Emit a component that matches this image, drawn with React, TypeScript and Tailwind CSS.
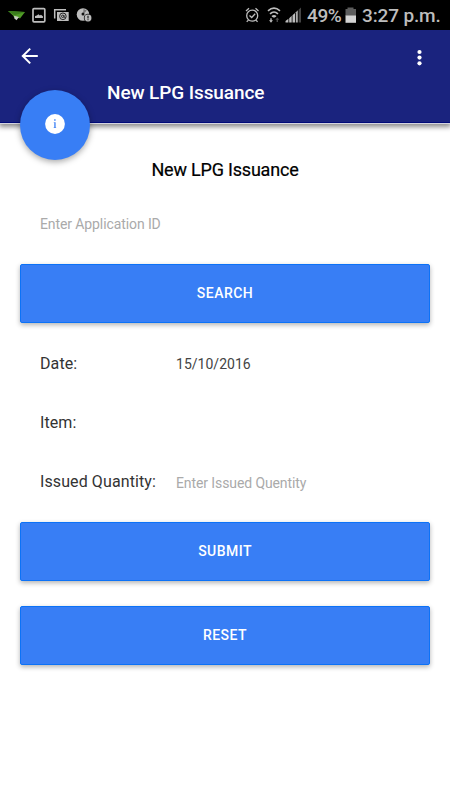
import type { ReactNode } from "react";

const FONT = "font-['Roboto','Liberation_Sans',sans-serif]";

function StatusBar() {
  return (
    <div className="flex h-[30px] items-center bg-black text-[#bdbdbd]">
      <svg width="104" height="30" viewBox="0 0 104 30" fill="none" className="shrink-0">
        <path d="M8 11 25 12 20 18.5 16.5 17 14.5 18 13 15.5Z" fill="#4f9a26" />
        <path d="M8 11 25 12 14.5 15.2Z" fill="#3a7d1c" />
        <path d="M14 15.8 19 17 16.5 20.2 14.5 18.5Z" fill="#c5cfc0" />
        <rect x="33" y="8.6" width="11.8" height="13.2" rx="1" stroke="currentColor" strokeWidth="1.7" />
        <path d="M35 18v-2l1.8-.4 1.6-1.4 1.5 1.2 1-.6 2 1.4V18Z" fill="currentColor" />
        <path d="M54.7 18.5V9.8H66" stroke="currentColor" strokeWidth="1.5" />
        <path d="M57 12h11.7v9H57Z" fill="currentColor" />
        <circle cx="62.9" cy="16.3" r="3.3" stroke="#222" strokeWidth="1" />
        <circle cx="62.7" cy="16.3" r="1.2" stroke="#222" strokeWidth="1" />
        <path d="M64 15v2.3h1.5" stroke="#222" strokeWidth=".8" />
        <circle cx="83" cy="14.5" r="6.3" fill="currentColor" />
        <path d="m83 14.5.5-5.5 3.3 1.5Z" fill="#777" />
        <circle cx="83" cy="14" r="1.5" fill="#111" />
        <circle cx="88" cy="18" r="4.2" fill="#111" />
        <circle cx="88" cy="18" r="3.4" fill="currentColor" />
        <path d="M88 15.8v2.7m0 .8v1" stroke="#111" strokeWidth="1.1" />
      </svg>
      <svg width="62" height="30" viewBox="242 0 62 30" fill="none" className="ml-[138px] shrink-0">
        <circle cx="252.2" cy="15.7" r="5.5" stroke="currentColor" strokeWidth="1.3" />
        <path d="m249.5 15.5 2.2 2 3.5-3.8M246 11l3-2.7m9.5 2.7-3-2.7m-7 11.8-1.8 1.7m9.1-1.7 1.8 1.7" stroke="currentColor" strokeWidth="1.3" />
        <path d="M268 10.8q6-5.3 12 0m-10 3q4-3.6 8 0m-6 2.8q2-1.7 4 0" stroke="currentColor" strokeWidth="1.6" />
        <path d="M271.7 18.3v2h1.3l-2 2.4-2-2.4h1.3v-2Z" fill="currentColor" />
        <path d="M273 16h2v1.6h-2Z" fill="currentColor" />
        <path d="M276.6 22v-2.2h-1.3l2-2.3 2 2.3h-1.3V22Z" fill="#4a4a4a" />
        <path d="M285.5 22.5v-1.4l2.9-2.4v3.8Zm3.7 0v-4.3l2.5-2.4v6.7Zm3.3 0v-7.2l2.5-2.4v9.6Z" fill="currentColor" />
        <path d="M295.8 22.5V12.3l2-2v12.2Z" fill="#aaa" />
        <path d="M298.6 22.5V9.7l2.4-2.2v15Z" fill="#444" />
      </svg>
      <span className="ml-[3px] w-[36px] whitespace-nowrap pt-px text-[19px] font-medium leading-[30px] tracking-[-0.4px]">49%</span>
      <svg width="14" height="30" viewBox="343 0 14 30" className="shrink-0">
        <path d="M345.5 9h2V7.6h6V9h2.5v7h-10.5Z" fill="#5c5c5c" />
        <path d="M345.5 15.5H356v7.3h-10.5Z" fill="#d3d3d3" />
      </svg>
      <span className="ml-[5px] whitespace-nowrap pt-px text-[19px] font-medium leading-[30px] tracking-[-0.15px]">3:27 p.m.</span>
    </div>
  );
}

function Header() {
  return (
    <header className="relative h-[93px] border-b border-[#000a78] bg-[#1a237e] text-white shadow-[0_1px_0_#d4d4df,0_3px_5px_1px_rgba(0,0,0,0.45)]">
      <div className="flex h-[52px] items-center justify-between pl-[21px] pr-[28px]">
        <button type="button" aria-label="Back">
          <svg width="18" height="18" viewBox="0 0 18 18" fill="none" stroke="white" strokeWidth="2">
            <path d="M16.8 9H2M9.2 1.6 1.8 9l7.4 7.4" />
          </svg>
        </button>
        <button type="button" aria-label="Menu" className="mt-[3px]">
          <svg width="5" height="18" viewBox="0 0 5 18" fill="white">
            <circle cx="2.5" cy="3" r="2.1" />
            <circle cx="2.5" cy="8.6" r="2.1" />
            <circle cx="2.5" cy="14.3" r="2.1" />
          </svg>
        </button>
      </div>
      <h1 className="pl-[107px] pt-px text-[19px] font-medium leading-5 tracking-[-0.1px]">New LPG Issuance</h1>
      <div className="absolute left-5 top-[60px] flex size-[70px] items-center justify-center rounded-full bg-[#387ef5] shadow-[0_2px_6px_rgba(0,0,0,0.35)]">
        <svg width="20" height="20" viewBox="0 0 20 20" className="-mt-[3px]">
          <circle cx="10" cy="10" r="9.9" fill="white" />
          <path d="M9.2 5.2h1.4v1.5H9.2Zm-.5 3h1.9v5.3h.6v.6H8.6v-.6h.7V8.8h-.6Z" fill="#387ef5" />
        </svg>
      </div>
    </header>
  );
}

function Button({ children }: { children: ReactNode }) {
  return (
    <button
      type="button"
      className="block h-[59px] w-full rounded-[2px] border border-[#0c72f7] bg-[#387ef5] text-[14px] font-medium tracking-[0.45px] text-white shadow-[0_2px_5px_rgba(0,0,0,0.3)]"
    >
      {children}
    </button>
  );
}

function Row({ label, children }: { label: string; children?: ReactNode }) {
  return (
    <div className="flex h-[59px] items-center pl-5">
      <span className="w-[136px] shrink-0 whitespace-nowrap text-[16px] tracking-[0.1px] text-[#333]">{label}</span>
      {children}
    </div>
  );
}

export default function App() {
  return (
    <div className={`h-[800px] w-[450px] overflow-hidden bg-white ${FONT}`}>
      <StatusBar />
      <Header />
      <main className="px-5 pt-[35px]">
        <h2 className="text-center text-[18px] leading-6 tracking-[-0.2px] text-black [-webkit-text-stroke:0.2px_black]">New LPG Issuance</h2>
        <input
          placeholder="Enter Application ID"
          className="mt-[30px] block h-6 w-full px-5 text-[14px] tracking-[-0.1px] outline-none placeholder:text-[#aaa]"
        />
        <div className="mt-[28px]">
          <Button>SEARCH</Button>
        </div>
        <div className="mt-[11px]">
          <Row label="Date:">
            <span className="mt-[2px] text-[14px] tracking-[0.02px] text-[#444]">15/10/2016</span>
          </Row>
          <Row label="Item:" />
          <Row label="Issued Quantity:">
            <input
              placeholder="Enter Issued Quentity"
              className="mt-[3px] h-6 w-[200px] text-[14px] tracking-[-0.1px] outline-none placeholder:text-[#aaa]"
            />
          </Row>
        </div>
        <div className="mt-[11px] space-y-[25px]">
          <Button>SUBMIT</Button>
          <Button>RESET</Button>
        </div>
      </main>
    </div>
  );
}
